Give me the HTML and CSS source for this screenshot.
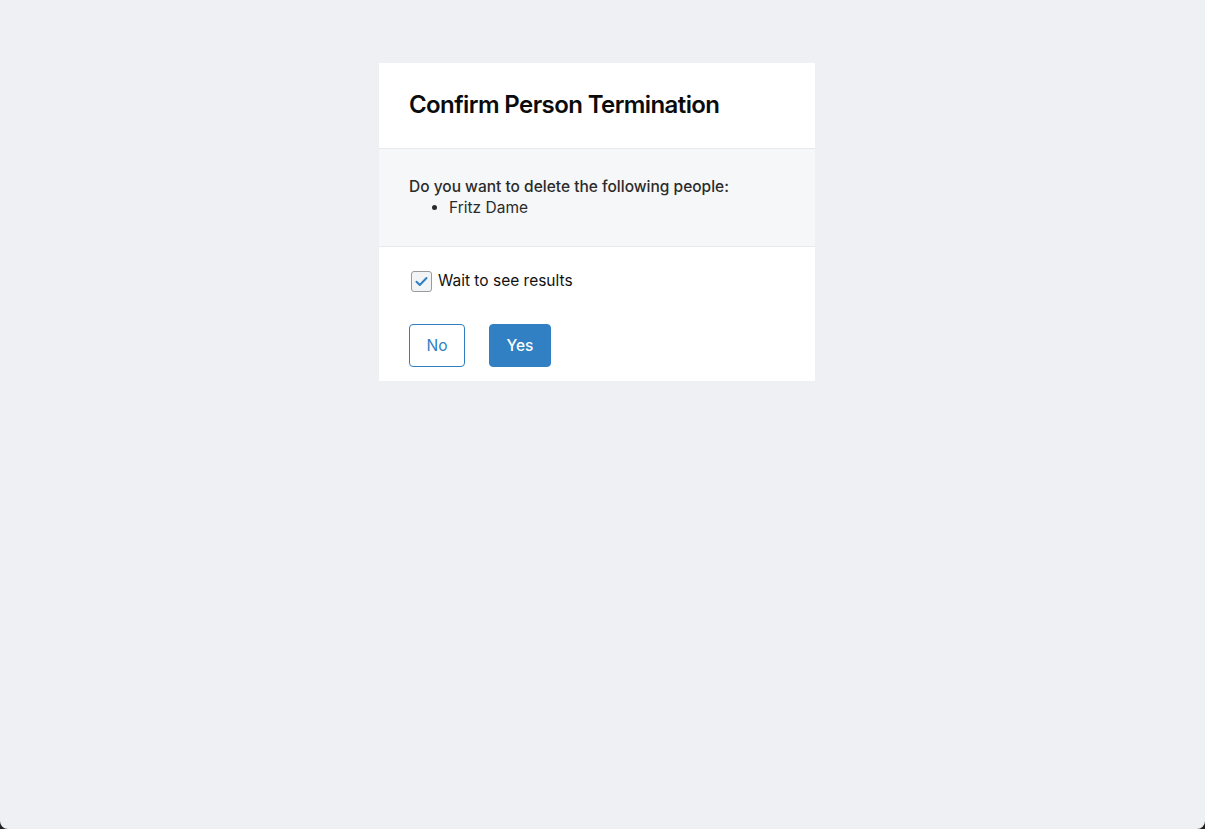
FILE: index.html
```html
<!DOCTYPE html>
<html>
<head>
<meta charset="utf-8">
<link rel="stylesheet" href="styles.css">
</head>
<body>
<div class="screen">
  <div class="dialog">
    <div class="dialog-header">
      <h1 class="title">Confirm Person Termination</h1>
    </div>
    <div class="dialog-body">
      <p class="question">Do you want to delete the following people:</p>
      <ul class="people">
        <li>Fritz Dame</li>
      </ul>
    </div>
    <div class="dialog-footer">
      <label class="check">
        <span class="box">
          <svg width="13" height="11" viewBox="0 0 13 11"><path d="M1.5 5.8 L4.8 9 L11.5 2" fill="none" stroke="#2f7fc1" stroke-width="2" stroke-linecap="round" stroke-linejoin="round"/></svg>
        </span>
        <span class="check-label">Wait to see results</span>
      </label>
      <div class="actions">
        <button class="btn btn-outline">No</button>
        <button class="btn btn-primary">Yes</button>
      </div>
    </div>
  </div>
</div>
</body>
</html>
```
FILE: styles.css
```css
html {
  background: #222;
  margin: 0;
  padding: 0;
}
body {
  margin: 0;
  padding: 0;
  font-family: Inter, "Noto Sans", sans-serif;
}
.screen {
  background: #eff0f3;
  height: 829px;
  border-radius: 0 0 8px 8px;
  display: flex;
  justify-content: center;
  align-items: flex-start;
  padding-top: 63px;
  padding-right: 11px;
  box-sizing: border-box;
}
.dialog {
  width: 436px;
  background: #fff;
}
.dialog-header {
  height: 86px;
  padding: 0 30px 2px;
  box-sizing: border-box;
  display: flex;
  align-items: center;
  border-bottom: 1px solid #e8e9ec;
}
.title {
  margin: 0;
  font-size: 24px;
  font-weight: 600;
  color: #0b0b0b;
  letter-spacing: -0.6px;
}
.dialog-body {
  background: #f6f7f9;
  padding: 28px 30px 22px;
  height: 98px;
  box-sizing: border-box;
  border-bottom: 1px solid #e8e9ec;
  color: #2b2b2b;
}
.question {
  margin: 0;
  font-size: 15.5px;
  font-weight: 500;
  line-height: 20px;
}
.people {
  margin: 0;
  padding-left: 40px;
  font-size: 15.5px;
  line-height: 21px;
}
.dialog-footer {
  padding: 24px 30px 14px;
}
.check {
  display: flex;
  align-items: center;
  gap: 6px;
  font-size: 15.5px;
  color: #111;
}
.check-label {
  margin-top: -2px;
}
.box {
  width: 19px;
  height: 19px;
  margin-left: 2px;
  border: 1px solid #9a9a9a;
  border-radius: 3px;
  background: #f3f4f6;
  display: flex;
  align-items: center;
  justify-content: center;
}
.actions {
  display: flex;
  gap: 24px;
  margin-top: 32px;
}
.btn {
  height: 43px;
  border-radius: 4px;
  font-family: Inter, "Noto Sans", sans-serif;
  font-size: 15.5px;
  cursor: pointer;
  padding: 0;
}
.btn-outline {
  width: 56px;
  background: #fff;
  border: 1px solid #2f7fc1;
  color: #2f7fc1;
}
.btn-primary {
  width: 62px;
  background: #3080c3;
  border: 1px solid #3080c3;
  color: #fff;
  font-weight: 500;
}
```
